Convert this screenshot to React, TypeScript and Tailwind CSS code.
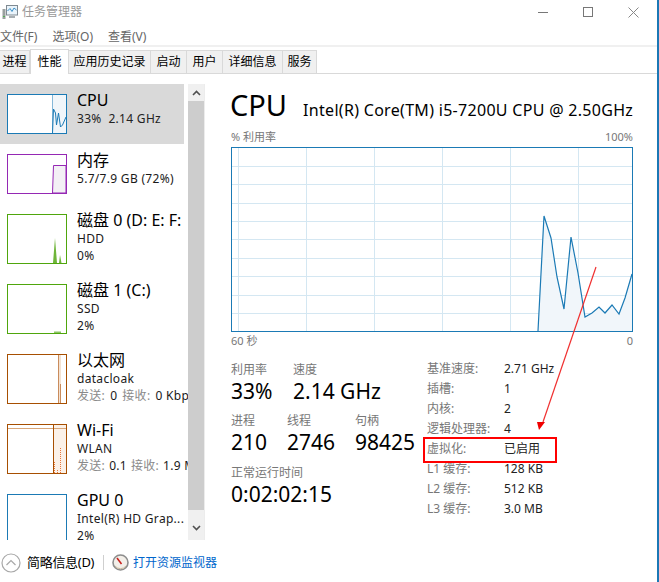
import React from 'react';

const FONT = '"Noto Sans", "Noto Sans CJK SC", sans-serif';

const TABS: { label: string; width: number; active?: boolean }[] = [
  { label: '进程', width: 30 },
  { label: '性能', width: 39, active: true },
  { label: '应用历史记录', width: 82 },
  { label: '启动', width: 36 },
  { label: '用户', width: 36 },
  { label: '详细信息', width: 60 },
  { label: '服务', width: 34 },
];

const SPECS: [string, string][] = [
  ['基准速度:', '2.71 GHz'],
  ['插槽:', '1'],
  ['内核:', '2'],
  ['逻辑处理器:', '4'],
  ['虚拟化:', '已启用'],
  ['L1 缓存:', '128 KB'],
  ['L2 缓存:', '512 KB'],
  ['L3 缓存:', '3.0 MB'],
];

// 图表折线,坐标相对图表左上角
const CPU_LINE = '307,184 313,69 320,91 326,130 333,162 340,90 347,126 354,170 361,166 368,160 374,166 381,158 388,167 394,151 401,127';

const Thumb: React.FC<{ border: string; height: number; children?: React.ReactNode }> = ({ border, height, children }) => (
  <svg width="60" height={height} className="shrink-0 block" viewBox={`0 0 60 ${height}`}>
    {children}
    <rect x="0.5" y="0.5" width="59" height={height - 1} fill="none" stroke={border} />
  </svg>
);

const Row: React.FC<{
  title: string;
  lines: React.ReactNode[];
  height: number;
  selected?: boolean;
  thumb: React.ReactNode;
}> = ({ title, lines, height, selected, thumb }) => (
  <div className={`flex shrink-0 pl-[7px] pt-[10px] overflow-hidden ${selected ? 'bg-[#d9d9d9] w-[184px]' : ''}`} style={{ height }}>
    {thumb}
    <div className="ml-[10px] -mt-[4px] whitespace-nowrap text-[#1a1a1a]">
      <div className="text-[16px] leading-[20px] text-black">{title}</div>
      {lines.map((l, i) => (
        <div key={i} className="text-[12px] leading-[17px] tracking-[0.3px]">{l}</div>
      ))}
    </div>
  </div>
);

const Stat: React.FC<{ label: string; value: string; width: number }> = ({ label, value, width }) => (
  <div style={{ width }} className="shrink-0 whitespace-nowrap">
    <div className="text-[12px] leading-[16px] text-[#777]">{label}</div>
    <div className="text-[21px] leading-[27px] text-black">{value}</div>
  </div>
);

const Muted: React.FC<{ children: React.ReactNode }> = ({ children }) => <span className="text-[#8a8a8a]">{children}</span>;

export default function App() {
  return (
    <div className="relative w-[659px] h-[582px] overflow-hidden bg-white border-r-2 border-[#1b78b5] flex flex-col" style={{ fontFamily: FONT }}>
      {/* 标题栏 */}
      <div className="h-[24px] flex items-center pl-[2px] shrink-0">
        <svg width="16" height="15" viewBox="0 0 16 15">
          <rect x="0.5" y="4" width="3" height="10" fill="#9aa0a0" />
          <rect x="1" y="11" width="2" height="1" fill="#50b050" />
          <rect x="4.5" y="0.5" width="11" height="9.5" fill="#eaf4fb" stroke="#7f8a92" />
          <path d="M5.5 6 L8 3.5 L10 6.5 L12 3 L14.5 5" fill="none" stroke="#3a8fc8" />
          <rect x="7" y="11" width="6" height="2" fill="#a8aeb2" />
        </svg>
        <span className="ml-[4px] text-[12px] text-[#999]">任务管理器</span>
        <div className="ml-auto flex items-center">
          <span className="block w-[10px] h-px bg-[#777] mr-[35px]" />
          <span className="block w-[10px] h-[10px] border border-[#777] mr-[35px]" />
          <svg width="11" height="11" viewBox="0 0 11 11" className="mr-[18px]">
            <path d="M0.5 0.5 L10.5 10.5 M10.5 0.5 L0.5 10.5" stroke="#888" fill="none" />
          </svg>
        </div>
      </div>

      {/* 菜单 */}
      <div className="h-[21px] flex items-center shrink-0 text-[12px] text-[#666] gap-[15px] pt-[5px]">
        <span>文件(F)</span>
        <span>选项(O)</span>
        <span>查看(V)</span>
      </div>
      <div className="h-[2px] bg-[#f0f0f0] shrink-0" />

      {/* 页签 */}
      <div className="h-[27px] shrink-0 flex items-end border-b border-[#d9d9d9] pt-[3px]">
        {TABS.map(t => (
          <div
            key={t.label}
            style={{ width: t.width }}
            className={`flex items-center justify-center text-[12px] text-black border-r border-[#d9d9d9] ${
              t.active ? 'h-[25px] bg-white border-l border-t -mb-px' : 'h-[23px] bg-[#f0f0f0] border-t'
            }`}
          >
            {t.label}
          </div>
        ))}
      </div>

      {/* 主体 */}
      <div className="flex mt-[10px] h-[456px] shrink-0">
        <div className="w-[188px] h-full flex flex-col overflow-hidden shrink-0">
          <Row
            title="CPU"
            height={60}
            selected
            lines={[<span className="text-[#222]">33%&nbsp; 2.14 GHz</span>]}
            thumb={
              <Thumb border="#1b7ab5" height={40}>
                <rect x="0" y="0" width="60" height="40" fill="#fff" />
                <rect x="45" y="1" width="14" height="38" fill="#f1f6fa" />
                <path d="M45.5 1 V39" stroke="#1b7ab5" strokeOpacity="0.5" fill="none" />
                <polyline points="45.5,39 46.5,15 48.5,19 49.5,31 51.5,19 53.5,33 55.5,31 59,23" fill="none" stroke="#1b7ab5" />
              </Thumb>
            }
          />
          <Row
            title="内存"
            height={60}
            lines={['5.7/7.9 GB (72%)']}
            thumb={
              <Thumb border="#9528b4" height={40}>
                <path d="M45.5 39 L46.5 11.5 H59 V39 Z" fill="#f3f0f5" stroke="#9528b4" />
              </Thumb>
            }
          />
          <Row
            title="磁盘 0 (D: E: F:"
            height={70}
            lines={['HDD', '0%']}
            thumb={
              <Thumb border="#4fa60c" height={50}>
                <path d="M46 49 L48 24 L50 49 Z M52 49 L53 41 L54.5 49 Z" fill="#6fb53a" />
              </Thumb>
            }
          />
          <Row
            title="磁盘 1 (C:)"
            height={70}
            lines={['SSD', '2%']}
            thumb={
              <Thumb border="#4fa60c" height={50}>
                <path d="M47 49 V47.5 H54 V49 Z" fill="#8cc464" />
              </Thumb>
            }
          />
          <Row
            title="以太网"
            height={70}
            lines={['datacloak', <><Muted>发送:</Muted><span className="ml-[5px]">0</span><Muted><span className="ml-[5px]">接收:</span></Muted><span className="ml-[5px]">0 Kbps</span></>]}
            thumb={
              <Thumb border="#a74f01" height={50}>
                <path d="M51 49 V1 H54 V49 Z" fill="#f3e2d2" />
                <path d="M51.5 49 V1 M53.5 49 V30" stroke="#b8682a" strokeOpacity="0.7" fill="none" />
              </Thumb>
            }
          />
          <Row
            title="Wi-Fi"
            height={70}
            lines={['WLAN', <><Muted>发送:</Muted><span className="ml-[4px]">0.1</span><Muted><span className="ml-[4px]">接收:</span></Muted><span className="ml-[4px]">1.9 Mbps</span></>]}
            thumb={
              <Thumb border="#a74f01" height={50}>
                <rect x="46" y="1" width="13" height="48" fill="#fbf1e8" />
                <path d="M1 4.5 H59" stroke="#d9a679" fill="none" />
                <path d="M46.5 1 V49" stroke="#a74f01" fill="none" />
                <path d="M47.5 49 V37 M50.5 49 V45 M53.5 49 V23" stroke="#e8763a" strokeDasharray="1 1" fill="none" />
              </Thumb>
            }
          />
          <Row
            title="GPU 0"
            height={70}
            lines={['Intel(R) HD Grap...', '2%']}
            thumb={<Thumb border="#1b7ab5" height={50} />}
          />
        </div>

        {/* 滚动条 */}
        <div className="w-[16px] h-full bg-[#f0f0f0] flex flex-col items-center shrink-0">
          <div className="h-[17px] flex items-center justify-center shrink-0">
            <svg width="9" height="6" viewBox="0 0 9 6"><path d="M1 5 L4.5 1.5 L8 5" stroke="#505050" strokeWidth="1.6" fill="none" /></svg>
          </div>
          <div className="w-full h-[409px] bg-[#cdcdcd] shrink-0" />
          <div className="flex-1 flex items-end pb-[9px]">
            <svg width="9" height="6" viewBox="0 0 9 6"><path d="M1 1 L4.5 4.5 L8 1" stroke="#505050" strokeWidth="1.6" fill="none" /></svg>
          </div>
        </div>
        <div className="w-px h-full bg-[#ececec] shrink-0" />

        {/* 性能详情 */}
        <div className="ml-[26px] flex-1 min-w-0 relative">
          <div className="flex items-baseline whitespace-nowrap h-[40px] mt-px -ml-px">
            <span className="text-[29px] leading-[40px] text-black">CPU</span>
            <span className="ml-[16px] text-[16px] tracking-[0.3px] text-black">Intel(R) Core(TM) i5-7200U CPU @ 2.50GHz</span>
          </div>
          <div className="w-[402px] flex justify-between text-[11px] leading-[14px] text-[#777] mt-[5px] h-[17px]">
            <span>% 利用率</span>
            <span>100%</span>
          </div>
          <svg width="402" height="185" viewBox="0 0 402 185" className="block">
            {[19, 37, 56, 74, 92, 111, 129, 148, 166].map(y => (
              <path key={y} d={`M1 ${y}.5 H401`} stroke="#d4e7f2" fill="none" />
            ))}
            {[7, 75, 143, 211, 279, 347].map(x => (
              <path key={x} d={`M${x}.5 1 V184`} stroke="#d4e7f2" fill="none" />
            ))}
            <polygon points={`${CPU_LINE} 401,184`} fill="#f1f6fa" />
            <polyline points={CPU_LINE} fill="none" stroke="#1b7ab5" strokeWidth="1.2" />
            <rect x="0.5" y="0.5" width="401" height="184" fill="none" stroke="#1b7ab5" />
          </svg>
          <div className="w-[402px] flex justify-between text-[11px] leading-[14px] text-[#777] mt-[2px]">
            <span>60 秒</span>
            <span>0</span>
          </div>

          <div className="flex mt-[14px]">
            <div className="w-[196px] shrink-0">
              <div className="flex">
                <Stat label="利用率" value="33%" width={62} />
                <Stat label="速度" value="2.14 GHz" width={120} />
              </div>
              <div className="flex mt-[8px]">
                <Stat label="进程" value="210" width={56} />
                <Stat label="线程" value="2746" width={68} />
                <Stat label="句柄" value="98425" width={70} />
              </div>
              <div className="mt-[9px]">
                <Stat label="正常运行时间" value="0:02:02:15" width={150} />
              </div>
            </div>
            <div className="grid grid-cols-[77px_1fr] auto-rows-[20px] text-[12px] items-center -mt-[3px]">
              {SPECS.map(([k, v]) => (
                <React.Fragment key={k}>
                  <span className="text-[#777] whitespace-nowrap">{k}</span>
                  <span className="text-[#222] whitespace-nowrap">{v}</span>
                </React.Fragment>
              ))}
            </div>
          </div>
        </div>
      </div>

      {/* 底部 */}
      <div className="flex items-center h-[42px] shrink-0 pl-[1px] pt-[3px]">
        <svg width="20" height="20" viewBox="0 0 20 20">
          <circle cx="10" cy="10" r="9" fill="none" stroke="#a8a8a8" strokeWidth="1.2" />
          <path d="M5.5 12 L10 7.5 L14.5 12" fill="none" stroke="#a8a8a8" strokeWidth="1.2" />
        </svg>
        <span className="ml-[6px] text-[13px] text-black w-[68px] whitespace-nowrap tracking-[-0.3px]">简略信息(D)</span>
        <span className="ml-[8px] block w-px h-[15px] bg-[#cfcfcf]" />
        <svg width="17" height="17" viewBox="0 0 17 17" className="ml-[8px]">
          <circle cx="8.5" cy="8.5" r="7.5" fill="#f3efe9" stroke="#8d8d8d" strokeWidth="1.6" />
          <path d="M5 4 L9.5 10" stroke="#c8201c" strokeWidth="1.6" fill="none" />
          <path d="M3 12 A7 7 0 0 0 14 12" stroke="#c9b99c" fill="none" />
        </svg>
        <span className="ml-[4px] text-[12px] text-[#0066cc] whitespace-nowrap">打开资源监视器</span>
      </div>

      {/* 红色标注 */}
      <div className="absolute left-[423px] top-[437px] w-[134px] h-[26px] border-2 border-[#ff0000]" />
      <svg width="80" height="180" viewBox="0 0 80 180" className="absolute left-[530px] top-[260px]">
        <path d="M66 7 L13 162" stroke="#f03030" strokeWidth="1.2" fill="none" />
        <polygon points="7,162 15,162 9,170" fill="#f00000" />
      </svg>
    </div>
  );
}
